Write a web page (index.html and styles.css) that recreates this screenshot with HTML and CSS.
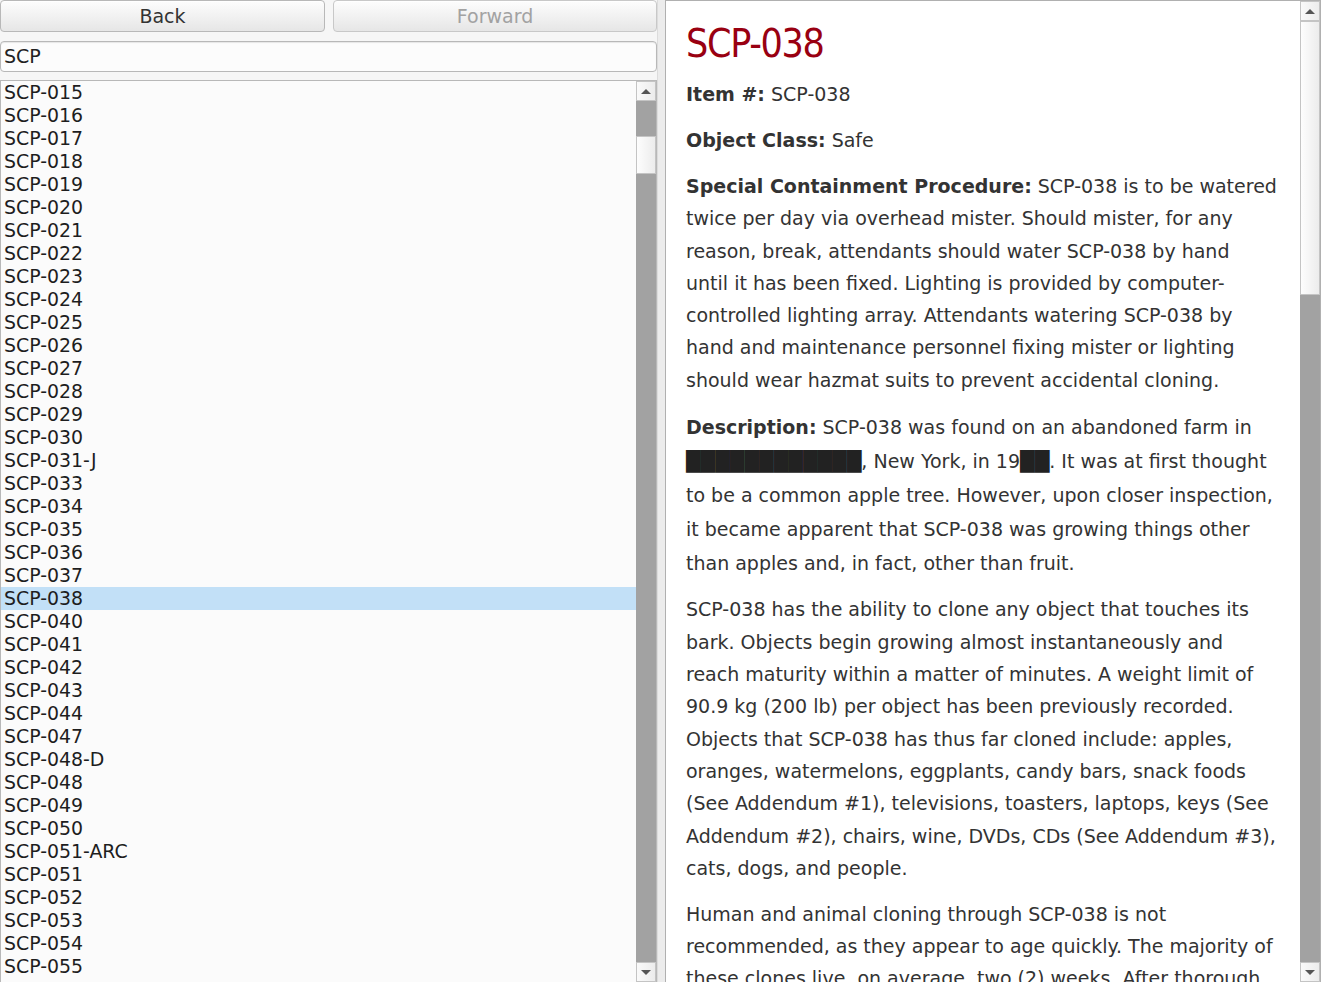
FILE: index.html
```html
<!DOCTYPE html>
<html>
<head>
<meta charset="utf-8">
<link rel="stylesheet" href="styles.css">
</head>
<body>
<div class="app">
  <div class="left">
    <div class="nav">
      <button class="btn btn-back">Back</button>
      <button class="btn btn-fwd" disabled>Forward</button>
    </div>
    <div class="search">SCP</div>
    <div class="list">
      <ul class="items">
        <li>SCP-015</li><li>SCP-016</li><li>SCP-017</li><li>SCP-018</li><li>SCP-019</li>
        <li>SCP-020</li><li>SCP-021</li><li>SCP-022</li><li>SCP-023</li><li>SCP-024</li>
        <li>SCP-025</li><li>SCP-026</li><li>SCP-027</li><li>SCP-028</li><li>SCP-029</li>
        <li>SCP-030</li><li>SCP-031-J</li><li>SCP-033</li><li>SCP-034</li><li>SCP-035</li>
        <li>SCP-036</li><li>SCP-037</li><li class="sel">SCP-038</li><li>SCP-040</li><li>SCP-041</li>
        <li>SCP-042</li><li>SCP-043</li><li>SCP-044</li><li>SCP-047</li><li>SCP-048-D</li>
        <li>SCP-048</li><li>SCP-049</li><li>SCP-050</li><li>SCP-051-ARC</li><li>SCP-051</li>
        <li>SCP-052</li><li>SCP-053</li><li>SCP-054</li><li>SCP-055</li><li>SCP-056</li>
      </ul>
      <div class="vbar vbar-list">
        <div class="arrow up"></div>
        <div class="track short"></div>
        <div class="thumb thumb-list"></div>
        <div class="track grow"></div>
        <div class="arrow down"></div>
      </div>
    </div>
  </div>
  <div class="divider"></div>
  <div class="right">
    <div class="content">
      <h1 class="title">SCP-038</h1>
      <p class="first"><b>Item #:</b> SCP-038</p>
      <p><b>Object Class:</b> Safe</p>
      <p><b>Special Containment Procedure:</b> SCP-038 is to be watered twice per day via overhead mister. Should mister, for any reason, break, attendants should water SCP-038 by hand<br>until it has been fixed. Lighting is provided by computer-controlled lighting array. Attendants watering SCP-038 by hand and maintenance personnel fixing mister or lighting should wear hazmat suits to prevent accidental cloning.</p>
      <p class="tall"><b>Description:</b> SCP-038 was found on an abandoned farm in <span class="redact">████████████</span>, New York, in 19<span class="redact">██</span>. It was at first thought to be a common apple tree. However, upon closer inspection, it became apparent that SCP-038 was growing things other than apples and, in fact, other than fruit.</p>
      <p>SCP-038 has the ability to clone any object that touches its bark. Objects begin growing almost instantaneously and reach maturity within a matter of minutes. A weight limit of 90.9 kg (200 lb) per object has been previously recorded. Objects that SCP-038 has thus far cloned include: apples, oranges, watermelons, eggplants, candy bars, snack foods (See Addendum #1), televisions, toasters, laptops, keys (See Addendum #2), chairs, wine, DVDs, CDs (See Addendum #3), cats, dogs, and people.</p>
      <p>Human and animal cloning through SCP-038 is not recommended, as they appear to age quickly. The majority of these clones live, on average, two (2) weeks. After thorough examination, clones have been found to be identical to the original in every way.</p>
    </div>
    <div class="vbar vbar-page">
      <div class="arrow up"></div>
      <div class="thumb thumb-page"></div>
      <div class="track grow"></div>
      <div class="arrow down"></div>
    </div>
  </div>
</div>
</body>
</html>
```

FILE: styles.css
```css
html, body {
  margin: 0;
  padding: 0;
}
body {
  width: 1321px;
  height: 982px;
  overflow: hidden;
  background: #f6f6f6;
  font-family: "DejaVu Sans", Verdana, sans-serif;
}
.app {
  display: flex;
  height: 982px;
}
.left {
  width: 657px;
  display: flex;
  flex-direction: column;
}
.nav {
  display: flex;
  gap: 8px;
  height: 32px;
}
.btn {
  flex: 1;
  margin: 0;
  border: 1px solid #b8b8b8;
  border-radius: 4px;
  background: linear-gradient(#fdfdfd, #e6e6e6);
  font-family: "DejaVu Sans", sans-serif;
  font-size: 19px;
  line-height: 30px;
  color: #333;
  padding: 0 0 1px;
  box-shadow: inset 0 1px 0 #fff;
}
.btn-back { flex: 0 0 325px; }
.btn-fwd { color: #a2a2a2; border-color: #c8c8c8; }
.search {
  margin-top: 9px;
  height: 31px;
  box-sizing: border-box;
  border: 1px solid #b8b8b8;
  border-radius: 4px;
  background: #fcfcfc;
  font-size: 19px;
  line-height: 29px;
  padding-left: 3px;
  color: #222;
  box-shadow: inset 0 1px 1px #e6e6e6;
}
.list {
  margin-top: 8px;
  flex: 1;
  border: 1px solid #b8b8b8;
  border-bottom: none;
  display: flex;
  background: #fbfbfb;
  overflow: hidden;
}
.items {
  list-style: none;
  margin: 0;
  padding: 0;
  flex: 1;
  overflow: hidden;
}
.items li {
  height: 23px;
  line-height: 23px;
  padding-left: 3px;
  font-size: 18.9px;
  color: #1e1e1e;
}
.items li.sel {
  background: #c2e0f7;
}
.vbar {
  width: 20px;
  display: flex;
  flex-direction: column;
  background: #a2a2a2;
}
.arrow {
  height: 20px;
  box-sizing: border-box;
  border: 1px solid #c4c4c4;
  background: linear-gradient(to right, #fafafa, #ececec);
  display: flex;
  align-items: center;
  justify-content: center;
}
.arrow::before {
  content: "";
  border-left: 5px solid transparent;
  border-right: 5px solid transparent;
}
.arrow.up::before { border-bottom: 5px solid #555; }
.arrow.down::before { border-top: 5px solid #555; }
.track.short { height: 35px; }
.track.grow { flex: 1; }
.thumb {
  box-sizing: border-box;
  border: 1px solid #c4c4c4;
  background: linear-gradient(to right, #fdfdfd, #ececec);
}
.thumb-list { height: 38px; }
.thumb-page { height: 274px; }
.divider {
  width: 7px;
  background: #ececec;
  border-left: 1px solid #dcdcdc;
}
.right {
  flex: 1;
  display: flex;
  border: 1px solid #b0b0b0;
  border-bottom: none;
  background: #fff;
  overflow: hidden;
}
.content {
  flex: 1;
  padding: 0 20px 0 20px;
  overflow: hidden;
  color: #333;
  font-size: 19px;
  line-height: 32.3px;
}
.title {
  margin: 18px 0 0;
  height: 50px;
  line-height: 50px;
  font-family: "DejaVu Sans Condensed", sans-serif;
  font-weight: normal;
  font-size: 39px;
  letter-spacing: -1.3px;
  color: #990011;
}
.content p {
  margin: 0 0 13.7px;
}
.content p.first {
  margin-top: 9px;
}
.content p.tall {
  line-height: 34px;
}
.redact {
  color: #222;
}
```
